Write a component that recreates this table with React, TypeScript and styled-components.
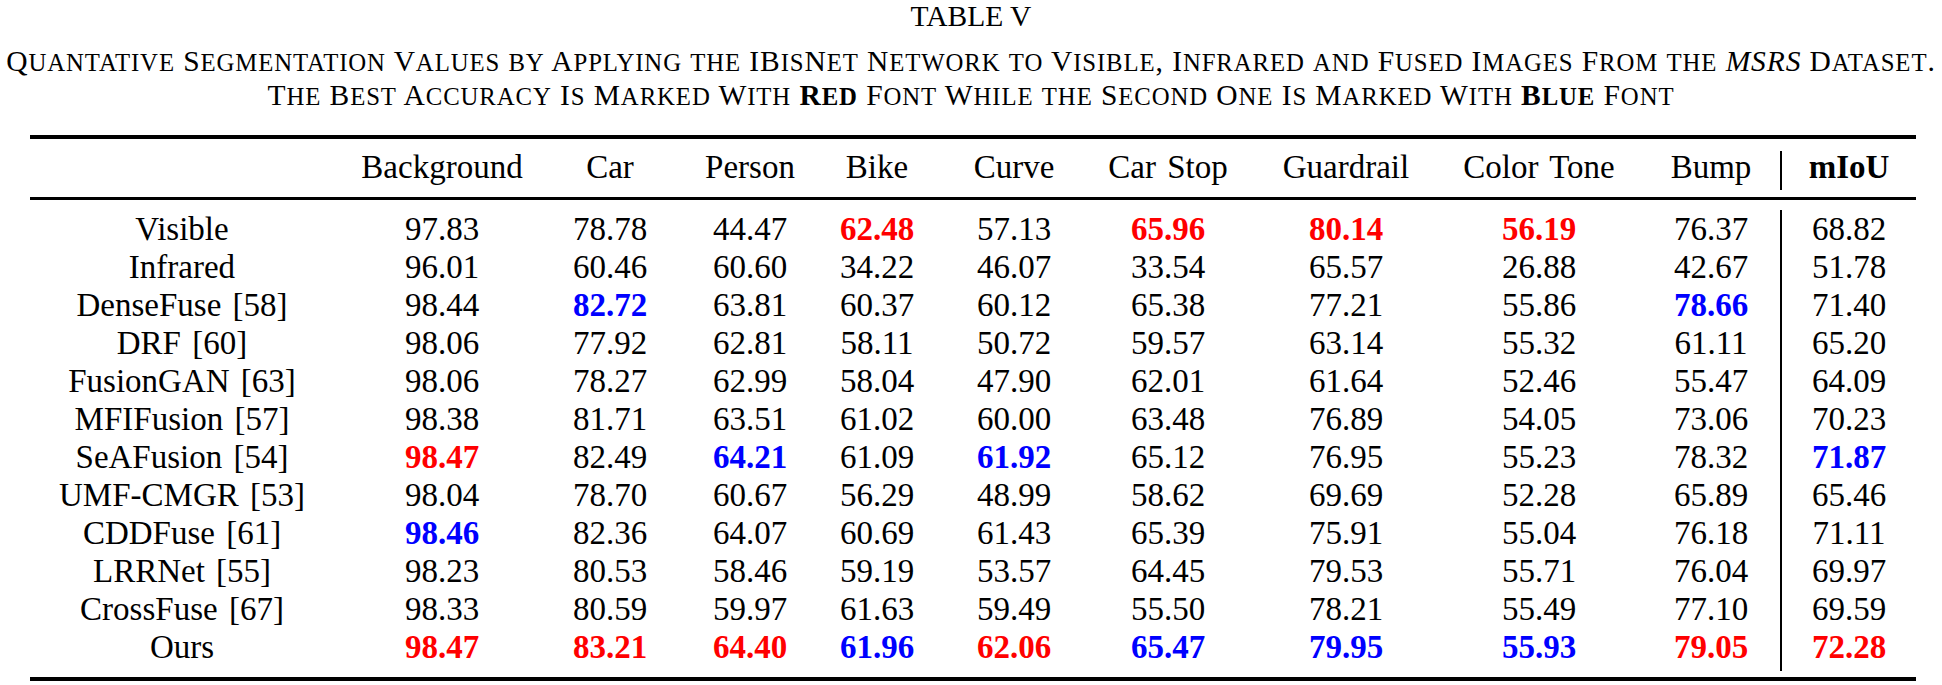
import React from "react";
import styled, { createGlobalStyle } from "styled-components";

const GlobalStyle = createGlobalStyle`
  html, body {
    margin: 0;
    padding: 0;
    background: #ffffff;
  }
`;

const Page = styled.div`
  width: 1942px;
  font-family: "Liberation Serif", "Times New Roman", serif;
  color: #000;
`;

const Title = styled.div`
  text-align: center;
  font-size: 29.5px;
  line-height: 32px;
`;

const Caption = styled.div`
  margin-top: 12px;
  font-size: 29.5px;
  line-height: 34px;
  text-align: center;
`;

const CaptionLine = styled.div`
  white-space: nowrap;
  letter-spacing: 0.9px;
`;

const Small = styled.span`
  font-size: 0.84em;
  line-height: 1;
  text-transform: uppercase;
`;

const Emph = styled.span`
  font-style: italic;
`;

const Strong = styled.span`
  font-weight: bold;
`;

const Table = styled.div`
  margin: 23px 0 0 30px;
  width: 1886px;
  border-top: 4px solid #000;
  border-bottom: 4px solid #000;
`;

const Header = styled.div`
  padding: 12px 0 7px;
  border-bottom: 3px solid #000;
`;

const Body = styled.div`
  padding: 10px 0 6px;
`;

const Row = styled.div`
  display: grid;
  grid-template-columns: 328px 168px 168px 112px 142px 132px 176px 180px 206px 138px 136px;
`;

const Cell = styled.div<{ $head?: boolean; $last?: boolean; $divider?: boolean; $label?: boolean; $tone?: "r" | "b" | ""; $bold?: boolean }>`
  text-align: center;
  white-space: nowrap;
  font-size: 33px;
  word-spacing: 3px;
  line-height: ${(p) => (p.$head ? "32px" : "38px")};
  padding-bottom: ${(p) => (p.$head ? "7px" : p.$last ? "5px" : "0")};
  padding-right: ${(p) => (p.$label ? "24px" : "0")};
  border-left: ${(p) => (p.$divider ? "2px solid #000" : "none")};
  color: ${(p) => (p.$tone === "r" ? "#ff0000" : p.$tone === "b" ? "#0000ff" : "#000")};
  font-weight: ${(p) => (p.$bold || p.$tone ? "bold" : "normal")};
`;

function sc(text: string, keyBase: string) {
  const parts = text.split(/([a-z]+)/);
  return parts
    .filter((p) => p.length > 0)
    .map((p, i) =>
      /^[a-z]+$/.test(p) ? (
        <Small key={keyBase + i}>{p}</Small>
      ) : (
        <React.Fragment key={keyBase + i}>{p}</React.Fragment>
      )
    );
}

const headers = [
  "Background",
  "Car",
  "Person",
  "Bike",
  "Curve",
  "Car Stop",
  "Guardrail",
  "Color Tone",
  "Bump",
];

const rows: [string, string[]][] = [
  ["Visible", ["97.83", "78.78", "44.47", "62.48r", "57.13", "65.96r", "80.14r", "56.19r", "76.37", "68.82"]],
  ["Infrared", ["96.01", "60.46", "60.60", "34.22", "46.07", "33.54", "65.57", "26.88", "42.67", "51.78"]],
  ["DenseFuse [58]", ["98.44", "82.72b", "63.81", "60.37", "60.12", "65.38", "77.21", "55.86", "78.66b", "71.40"]],
  ["DRF [60]", ["98.06", "77.92", "62.81", "58.11", "50.72", "59.57", "63.14", "55.32", "61.11", "65.20"]],
  ["FusionGAN [63]", ["98.06", "78.27", "62.99", "58.04", "47.90", "62.01", "61.64", "52.46", "55.47", "64.09"]],
  ["MFIFusion [57]", ["98.38", "81.71", "63.51", "61.02", "60.00", "63.48", "76.89", "54.05", "73.06", "70.23"]],
  ["SeAFusion [54]", ["98.47r", "82.49", "64.21b", "61.09", "61.92b", "65.12", "76.95", "55.23", "78.32", "71.87b"]],
  ["UMF-CMGR [53]", ["98.04", "78.70", "60.67", "56.29", "48.99", "58.62", "69.69", "52.28", "65.89", "65.46"]],
  ["CDDFuse [61]", ["98.46b", "82.36", "64.07", "60.69", "61.43", "65.39", "75.91", "55.04", "76.18", "71.11"]],
  ["LRRNet [55]", ["98.23", "80.53", "58.46", "59.19", "53.57", "64.45", "79.53", "55.71", "76.04", "69.97"]],
  ["CrossFuse [67]", ["98.33", "80.59", "59.97", "61.63", "59.49", "55.50", "78.21", "55.49", "77.10", "69.59"]],
  ["Ours", ["98.47r", "83.21r", "64.40r", "61.96b", "62.06r", "65.47b", "79.95b", "55.93b", "79.05r", "72.28r"]],
];

export default function App() {
  return (
    <Page>
      <GlobalStyle />
      <Title>TABLE V</Title>
      <Caption>
        <CaptionLine>
          {sc(
            "Quantative Segmentation Values by Applying the IBisNet Network to Visible, Infrared and Fused Images From the ",
            "a"
          )}
          <Emph>MSRS</Emph>
          {sc(" Dataset.", "b")}
        </CaptionLine>
        <CaptionLine>
          {sc("The Best Accuracy Is Marked With ", "c")}
          <Strong>{sc("Red", "d")}</Strong>
          {sc(" Font While the Second One Is Marked With ", "e")}
          <Strong>{sc("Blue", "f")}</Strong>
          {sc(" Font", "g")}
        </CaptionLine>
      </Caption>
      <Table>
        <Header>
          <Row>
            <Cell $head $label />
            {headers.map((h) => (
              <Cell $head key={h}>
                {h}
              </Cell>
            ))}
            <Cell $head $divider $bold>
              mIoU
            </Cell>
          </Row>
        </Header>
        <Body>
          {rows.map(([name, vals], ri) => {
            const last = ri === rows.length - 1;
            return (
              <Row key={name}>
                <Cell $label $last={last}>
                  {name}
                </Cell>
                {vals.map((v, ci) => {
                  const tone = v.endsWith("r") ? "r" : v.endsWith("b") ? "b" : "";
                  const num = tone ? v.slice(0, -1) : v;
                  return (
                    <Cell key={ci} $last={last} $tone={tone} $divider={ci === vals.length - 1}>
                      {num}
                    </Cell>
                  );
                })}
              </Row>
            );
          })}
        </Body>
      </Table>
    </Page>
  );
}
